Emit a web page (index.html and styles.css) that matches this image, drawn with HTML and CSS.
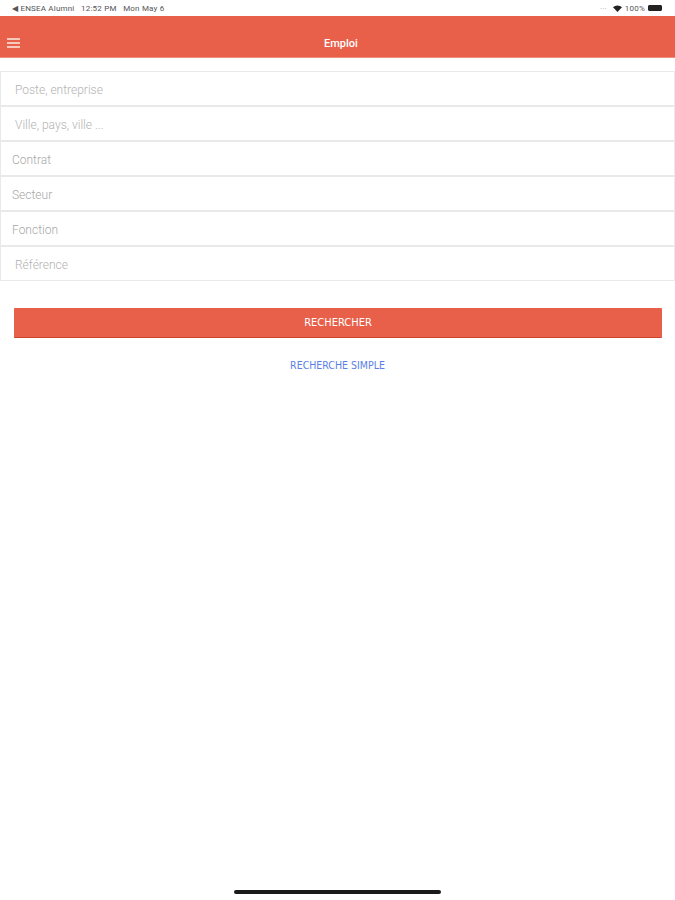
FILE: index.html
```html
<!DOCTYPE html>
<html lang="fr">
<head>
  <meta charset="UTF-8" />
  <meta name="viewport" content="width=device-width, initial-scale=1.0"/>
  <title>Emploi</title>
  <link rel="stylesheet" href="styles.css">
</head>
<body>
  <div class="page">
    <!-- Barre d'état -->
    <div class="status-bar">
      <span class="status-left">&#9664; ENSEA Alumni &nbsp; 12:52 PM &nbsp; Mon May 6</span>
      <span class="status-right">
        <span class="dots">&middot;&middot;&middot;</span>
        <svg class="wifi" width="9" height="7" viewBox="0 0 9 7">
          <path d="M4.5 7 L0 2.2 A6.5 6.5 0 0 1 9 2.2 Z" fill="#222"/>
        </svg>
        <span>100%</span>
        <span class="battery"><span class="battery-fill"></span></span>
      </span>
    </div>

    <!-- Barre de titre -->
    <header class="topbar">
      <svg class="menu-icon" width="13" height="10" viewBox="0 0 13 10">
        <rect x="0" y="0" width="13" height="2" fill="#f7c9bd"/>
        <rect x="0" y="4" width="13" height="2" fill="#f7c9bd"/>
        <rect x="0" y="8" width="13" height="2" fill="#f7c9bd"/>
      </svg>
      <h1 class="title">Emploi</h1>
      <span></span>
    </header>

    <!-- Formulaire de recherche avancée -->
    <form class="search-form">
      <div class="field indent"><input type="text" placeholder="Poste, entreprise"></div>
      <div class="field indent"><input type="text" placeholder="Ville, pays, ville ..."></div>
      <div class="field"><span class="select">Contrat</span></div>
      <div class="field"><span class="select">Secteur</span></div>
      <div class="field"><span class="select">Fonction</span></div>
      <div class="field indent"><input type="text" placeholder="Référence"></div>

      <button type="submit" class="btn-search">RECHERCHER</button>
      <a href="#" class="link-simple">RECHERCHE SIMPLE</a>
    </form>

    <div class="home-indicator"></div>
  </div>
</body>
</html>
```

FILE: styles.css
```css
* {
  box-sizing: border-box;
  margin: 0;
  padding: 0;
  font-family: Roboto, 'Liberation Sans', sans-serif;
}
body {
  background: #ffffff;
}
.page {
  min-height: 100vh;
  display: flex;
  flex-direction: column;
}
.status-bar {
  height: 16px;
  display: flex;
  justify-content: space-between;
  align-items: center;
  padding: 0 13px 0 12px;
  font-size: 8px;
  letter-spacing: 0.2px;
  color: #555;
}
.status-right {
  display: flex;
  align-items: center;
  gap: 3px;
}
.dots {
  color: #aaa;
  margin-right: 3px;
}
.battery {
  width: 14px;
  height: 6px;
  border: 1px solid #222;
  border-radius: 1px;
}
.battery-fill {
  display: block;
  width: 100%;
  height: 100%;
  background: #222;
}
.topbar {
  height: 42px;
  background: #e8604a;
  border-bottom: 1px solid #f08e7c;
  display: grid;
  grid-template-columns: 1fr auto 1fr;
  align-items: center;
  padding: 13px 0 0 7px;
}
.title {
  font-size: 11px;
  font-weight: 500;
  color: #fff;
}
.search-form {
  margin-top: 13px;
  display: flex;
  flex-direction: column;
}
.field {
  height: 35px;
  border: 1px solid #e9e9e9;
  display: flex;
  align-items: center;
  padding: 2px 0 0 11px;
}
.field.indent {
  padding-left: 14px;
}
.field input {
  border: none;
  outline: none;
  width: 100%;
  font-size: 12px;
  font-weight: 300;
  background: transparent;
  color: #333;
}
.field input::placeholder {
  color: #b3b3b3;
}
.select {
  font-size: 12px;
  font-weight: 300;
  color: #a8a8a8;
}
.btn-search {
  margin: 27px 13px 0 14px;
  height: 30px;
  border: none;
  border-bottom: 1px solid #c9452f;
  border-radius: 1px;
  background: #e8604a;
  color: #fff;
  font-size: 11px;
  font-family: 'DejaVu Sans Condensed', 'Liberation Sans Narrow', sans-serif;
  cursor: pointer;
}
.link-simple {
  align-self: center;
  margin-top: 21px;
  font-size: 10.5px;
  font-family: 'DejaVu Sans Condensed', 'Liberation Sans Narrow', sans-serif;
  color: #5b7fe6;
  text-decoration: none;
}
.home-indicator {
  margin: auto auto 6px;
  width: 207px;
  height: 4px;
  border-radius: 2px;
  background: #1a1a1a;
}
```
